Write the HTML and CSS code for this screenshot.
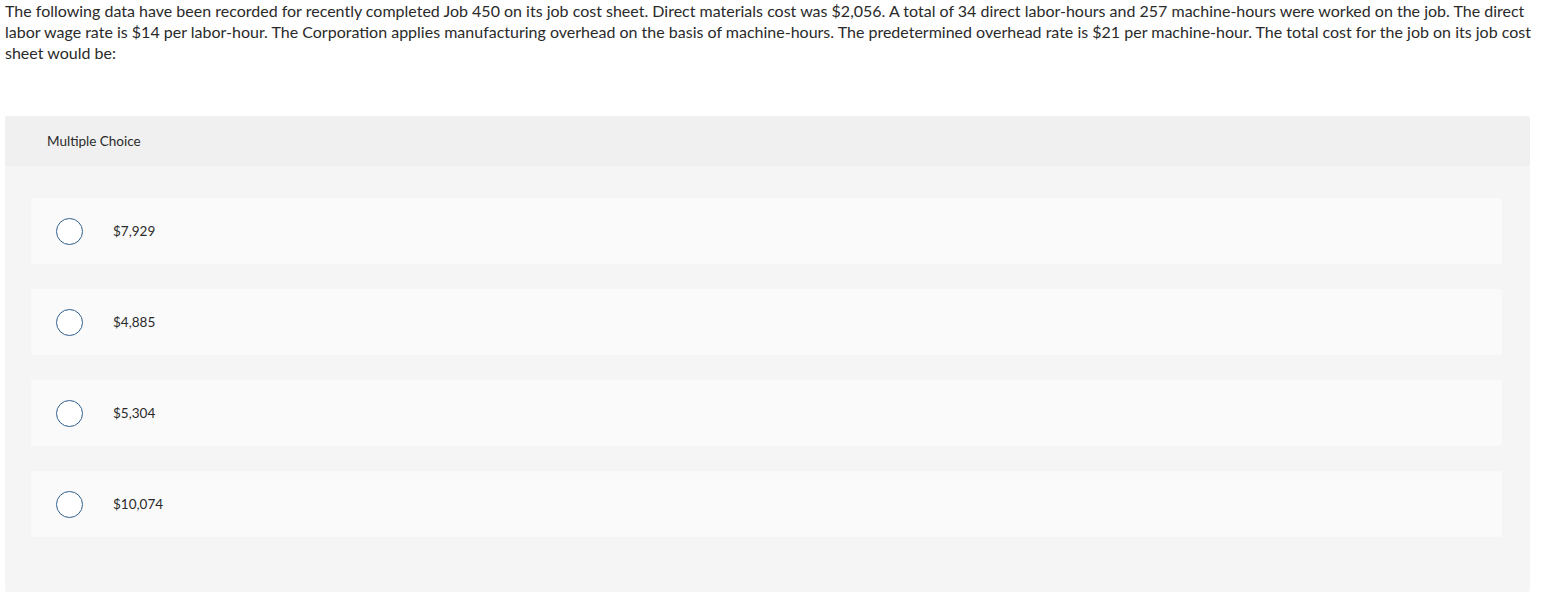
FILE: index.html
```html
<!DOCTYPE html>
<html lang="en">
<head>
<meta charset="utf-8">
<title>Multiple Choice</title>
<link rel="stylesheet" href="styles.css">
</head>
<body>
<div class="page">
  <p class="prompt">The following data have been recorded for recently completed Job 450 on its job cost sheet. Direct materials cost was $2,056. A total of 34 direct labor-hours and 257 machine-hours were worked on the job. The direct labor wage rate is $14 per labor-hour. The Corporation applies manufacturing overhead on the basis of machine-hours. The predetermined overhead rate is $21 per machine-hour. The total cost for the job on its job cost sheet would be:</p>
  <section class="panel">
    <div class="panel-head">Multiple Choice</div>
    <div class="panel-body">
      <div class="choice"><span class="radio"></span><span class="label">$7,929</span></div>
      <div class="choice"><span class="radio"></span><span class="label">$4,885</span></div>
      <div class="choice"><span class="radio"></span><span class="label">$5,304</span></div>
      <div class="choice"><span class="radio"></span><span class="label">$10,074</span></div>
    </div>
  </section>
</div>
</body>
</html>
```
FILE: styles.css
```css
html, body {
  margin: 0;
  padding: 0;
  background: #ffffff;
}
body {
  font-family: Lato, "Open Sans", "Liberation Sans", sans-serif;
  color: #2a2a2a;
}
.page {
  padding: 0 4px 0 5px;
}
.prompt {
  margin: 0;
  font-size: 16px;
  line-height: 21px;
  color: #2a2a2a;
}
.panel {
  margin-top: 53px;
  width: 1525px;
  border-radius: 3px;
  overflow: hidden;
  background: #f5f5f5;
}
.panel-head {
  height: 50px;
  display: flex;
  align-items: center;
  padding-left: 42px;
  background: #f0f0f0;
  font-size: 13.5px;
  color: #2a2a2a;
}
.panel-body {
  display: flex;
  flex-direction: column;
  gap: 25px;
  padding: 32px 28px 55px 26px;
}
.choice {
  height: 66px;
  display: flex;
  align-items: center;
  gap: 30px;
  padding-left: 25px;
  background: #fafafa;
  border-radius: 3px;
}
.radio {
  width: 25px;
  height: 25px;
  border: 1.5px solid #2f5f8c;
  border-radius: 50%;
  background: #ffffff;
  flex: none;
}
.label {
  font-size: 13.5px;
  color: #2a2a2a;
}
```
